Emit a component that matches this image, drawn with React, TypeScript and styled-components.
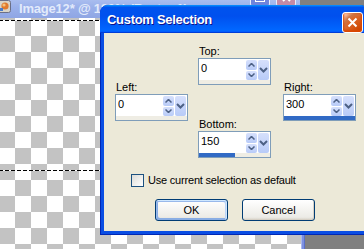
import styled, { createGlobalStyle } from "styled-components";

const GlobalStyle = createGlobalStyle`
  html, body {
    margin: 0;
    padding: 0;
    background: #808080;
  }
  * {
    box-sizing: border-box;
  }
`;

const MAX = 300;

function UpArrow() {
  return (
    <svg width="7" height="4" viewBox="0 0 7 4">
      <polyline points="0.5,3.5 3.5,0.5 6.5,3.5" fill="none" stroke="#4d6185" strokeWidth="1.5" />
    </svg>
  );
}

function DownArrow() {
  return (
    <svg width="7" height="4" viewBox="0 0 7 4">
      <polyline points="0.5,0.5 3.5,3.5 6.5,0.5" fill="none" stroke="#4d6185" strokeWidth="1.5" />
    </svg>
  );
}

function Chevron() {
  return (
    <svg width="9" height="6" viewBox="0 0 9 6">
      <polyline points="1,1 4.5,4.5 8,1" fill="none" stroke="#4d6185" strokeWidth="2" />
    </svg>
  );
}

function SpinField({ label, value, gap }: { label: string; value: number; gap?: number }) {
  const fill = (value / MAX) * 100;
  return (
    <S.Field $gap={gap ?? 0}>
      <S.FieldLabel>{label}</S.FieldLabel>
      <S.SpinBox>
        <S.SpinRow>
          <S.SpinInput>{value}</S.SpinInput>
          <S.ArrowStack>
            <S.ArrowButton>
              <UpArrow />
            </S.ArrowButton>
            <S.ArrowButton>
              <DownArrow />
            </S.ArrowButton>
          </S.ArrowStack>
          <S.DropButton>
            <Chevron />
          </S.DropButton>
        </S.SpinRow>
        <S.SpinTrack>
          <S.SpinFill style={{ width: `${fill}%` }} />
        </S.SpinTrack>
      </S.SpinBox>
    </S.Field>
  );
}

function App() {
  return (
    <>
      <GlobalStyle />
      <S.Page>
        <S.ImageWindow>
          <S.WindowTitle>
            <svg width="14" height="13" viewBox="0 0 14 13" style={{ marginLeft: -3 }}>
              <rect x="0.5" y="0.5" width="13" height="12" rx="2" fill="#d9d4c8" stroke="#6b6f86" />
              <circle cx="8" cy="6" r="3.6" fill="#e07a2e" />
              <circle cx="7" cy="5" r="1.6" fill="#f6c07a" />
              <rect x="2" y="8" width="4" height="3" fill="#4a7bc8" />
            </svg>
            <S.WindowTitleText>Image12* @ 100% (Raster 1)</S.WindowTitleText>
            <S.Spacer />
            <S.WindowButton $tone="blue">
              <S.MaxGlyph />
            </S.WindowButton>
            <S.WindowButton $tone="red">
              <svg width="9" height="9" viewBox="0 0 9 9">
                <path d="M1 1 L8 8 M8 1 L1 8" stroke="#fff" strokeWidth="2" />
              </svg>
            </S.WindowButton>
          </S.WindowTitle>
          <S.WindowBody>
            <S.Canvas>
              <S.Marquee />
            </S.Canvas>
            <S.RightFrame />
          </S.WindowBody>
        </S.ImageWindow>

        <S.Dialog>
          <S.DialogTitle>
            <S.DialogTitleText>Custom Selection</S.DialogTitleText>
            <S.CloseButton>
              <svg width="11" height="11" viewBox="0 0 11 11">
                <path d="M1.5 1.5 L9.5 9.5 M9.5 1.5 L1.5 9.5" stroke="#fff" strokeWidth="2" />
              </svg>
            </S.CloseButton>
          </S.DialogTitle>
          <S.Client>
            <S.Fields>
              <S.Column $top={36} $left={0}>
                <SpinField label="Left:" value={0} />
              </S.Column>
              <S.Column $top={0} $left={10}>
                <SpinField label="Top:" value={0} />
                <SpinField label="Bottom:" value={150} gap={33} />
              </S.Column>
              <S.Column $top={36} $left={12}>
                <SpinField label="Right:" value={300} />
              </S.Column>
            </S.Fields>
            <S.CheckRow>
              <S.CheckBox />
              <S.CheckLabel>Use current selection as default</S.CheckLabel>
            </S.CheckRow>
            <S.ButtonRow>
              <S.XpButton $primary>OK</S.XpButton>
              <S.XpButton>Cancel</S.XpButton>
            </S.ButtonRow>
          </S.Client>
        </S.Dialog>
      </S.Page>
    </>
  );
}

export default App;

const S = {
  Page: styled.div`
    position: relative;
    width: 364px;
    height: 249px;
    overflow: hidden;
    background: #808080;
    display: flex;
    font-family: "Liberation Sans", Arial, sans-serif;
  `,

  ImageWindow: styled.div`
    width: 305px;
    height: 100%;
    display: flex;
    flex-direction: column;
  `,

  WindowTitle: styled.div`
    width: 300px;
    height: 18px;
    flex-shrink: 0;
    display: flex;
    align-items: flex-start;
    background: linear-gradient(180deg, #a9bdef 0%, #9ab0ea 40%, #8fa6e4 100%);
    overflow: hidden;
  `,

  WindowTitleText: styled.span`
    margin-left: 8px;
    margin-top: 1px;
    color: #e2eafb;
    font-family: "Liberation Sans", Arial, sans-serif;
    font-weight: 700;
    font-size: 13px;
    line-height: 15px;
    letter-spacing: -0.2px;
    white-space: nowrap;
  `,

  Spacer: styled.div`
    flex: 1;
  `,

  WindowButton: styled.div<{ $tone: "blue" | "red" }>`
    width: 20px;
    height: 20px;
    margin-top: -13px;
    margin-right: ${({ $tone }) => ($tone === "red" ? "4px" : "6px")};
    border: 1px solid #e8ecfb;
    border-radius: 3px;
    background: ${({ $tone }) => ($tone === "red" ? "#c58aa6" : "#6f84dc")};
    display: flex;
    align-items: center;
    justify-content: center;
  `,

  MaxGlyph: styled.div`
    width: 10px;
    height: 10px;
    border: 1px solid #fff;
    border-top-width: 3px;
  `,

  WindowBody: styled.div`
    flex: 1;
    display: flex;
  `,

  Canvas: styled.div`
    position: relative;
    flex: 1;
    background-color: #fff;
    background-image: conic-gradient(#c3c3c3 0 25%, #fff 0 50%, #c3c3c3 0 75%, #fff 0);
    background-size: 32px 32px;
    background-position: -1px 2px;
  `,

  Marquee: styled.div`
    position: absolute;
    left: -1px;
    top: 2px;
    width: 302px;
    height: 151px;
    background-image: repeating-linear-gradient(90deg, #000 0 4px, #fff 4px 6px),
      repeating-linear-gradient(90deg, #000 0 4px, #fff 4px 6px);
    background-size: 100% 1px, 100% 1px;
    background-position: 0 0, 0 100%;
    background-repeat: no-repeat;
  `,

  RightFrame: styled.div`
    width: 4px;
    background: linear-gradient(90deg, #aab8ee 0 1px, #7c90e0 1px 3px, #5a6fc8 3px);
  `,

  Dialog: styled.div`
    position: absolute;
    left: 100px;
    top: 5px;
    width: 268px;
    height: 230px;
    display: flex;
    flex-direction: column;
    border-radius: 8px 8px 0 0;
    background: #0a4ee4;
    border: 1px solid #0027b5;
    border-top: none;
    padding: 0 3px 3px 3px;
  `,

  DialogTitle: styled.div`
    height: 28px;
    margin: 0 -4px;
    padding: 0 5px 0 7px;
    display: flex;
    align-items: center;
    border-radius: 8px 8px 0 0;
    background: linear-gradient(
      180deg,
      #0997ff,
      #0053ee 8%,
      #0050ee 40%,
      #0066ff 88%,
      #0066ff 93%,
      #005bff 95%,
      #003dd7 96%,
      #003dd7
    );
  `,

  DialogTitleText: styled.span`
    flex: 1;
    color: #fff;
    font-family: "Liberation Sans", Arial, sans-serif;
    font-weight: 700;
    font-size: 13px;
    letter-spacing: -0.3px;
    text-shadow: 1px 1px #0f1089;
    white-space: nowrap;
    margin-top: 1px;
  `,

  CloseButton: styled.div`
    width: 21px;
    height: 21px;
    margin-top: 6px;
    border: 1px solid #fff;
    border-radius: 3px;
    background: radial-gradient(circle at 90% 90%, #cc4600 0%, #dc6527 55%, #cd7546 70%, #ffccb2 90%, #fff 100%);
    box-shadow: inset 0 -1px 2px 1px #da4600;
    display: flex;
    align-items: center;
    justify-content: center;
  `,

  Client: styled.div`
    flex: 1;
    background: #ece9d8;
    padding: 12px 0 0 11px;
    display: flex;
    flex-direction: column;
    font-family: "Liberation Sans", Arial, sans-serif;
    font-size: 11px;
    color: #000;
  `,

  Fields: styled.div`
    display: flex;
    align-items: flex-start;
  `,

  Column: styled.div<{ $top: number; $left: number }>`
    display: flex;
    flex-direction: column;
    margin-top: ${({ $top }) => $top}px;
    margin-left: ${({ $left }) => $left}px;
  `,

  Field: styled.div<{ $gap: number }>`
    display: flex;
    flex-direction: column;
    margin-top: ${({ $gap }) => $gap}px;
  `,

  FieldLabel: styled.div`
    height: 13px;
    line-height: 13px;
    font-size: 11px;
    padding-left: 1px;
  `,

  SpinBox: styled.div`
    width: 73px;
    height: 27px;
    border: 1px solid #7f9db9;
    background: #fff;
    display: flex;
    flex-direction: column;
  `,

  SpinRow: styled.div`
    height: 21px;
    display: flex;
  `,

  SpinInput: styled.div`
    flex: 1;
    padding: 3px 0 0 2px;
    font-size: 11px;
    line-height: 13px;
  `,

  ArrowStack: styled.div`
    width: 11px;
    margin-top: 1px;
    display: flex;
    flex-direction: column;
    gap: 1px;
  `,

  ArrowButton: styled.div`
    flex: 1;
    border-radius: 2px;
    background: linear-gradient(180deg, #d6e0fc, #b8cbf8);
    display: flex;
    align-items: center;
    justify-content: center;
  `,

  DropButton: styled.div`
    width: 11px;
    margin: 1px 1px 0 1px;
    border-radius: 2px;
    background: linear-gradient(180deg, #d6e0fc, #b8cbf8);
    display: flex;
    align-items: center;
    justify-content: center;
  `,

  SpinTrack: styled.div`
    height: 4px;
    background: #efede4;
  `,

  SpinFill: styled.div`
    height: 100%;
    background: #316ac5;
  `,

  CheckRow: styled.div`
    margin-top: 16px;
    padding-left: 16px;
    display: flex;
    align-items: center;
    gap: 4px;
    height: 13px;
  `,

  CheckBox: styled.div`
    width: 13px;
    height: 13px;
    border: 1px solid #1c5180;
    background: linear-gradient(135deg, #dcdcd7, #fff);
  `,

  CheckLabel: styled.span`
    font-size: 11px;
    line-height: 13px;
    letter-spacing: -0.2px;
    white-space: nowrap;
  `,

  ButtonRow: styled.div`
    margin-top: 12px;
    padding-left: 40px;
    display: flex;
    gap: 14px;
  `,

  XpButton: styled.div<{ $primary?: boolean }>`
    width: 73px;
    height: 22px;
    border: 1px solid #003c74;
    border-radius: 3px;
    background: linear-gradient(180deg, #fff, #ecebe6 86%, #d6d0c5);
    display: flex;
    align-items: center;
    justify-content: center;
    font-size: 11px;
    box-shadow: ${({ $primary }) =>
      $primary
        ? "inset -1px 1px #cee7ff, inset 1px 2px #98b8ea, inset -2px 2px #bcd4f6, inset 1px -1px #89ade4, inset 2px -2px #89ade4"
        : "inset -1px -1px #d6d0c5"};
  `,
};
